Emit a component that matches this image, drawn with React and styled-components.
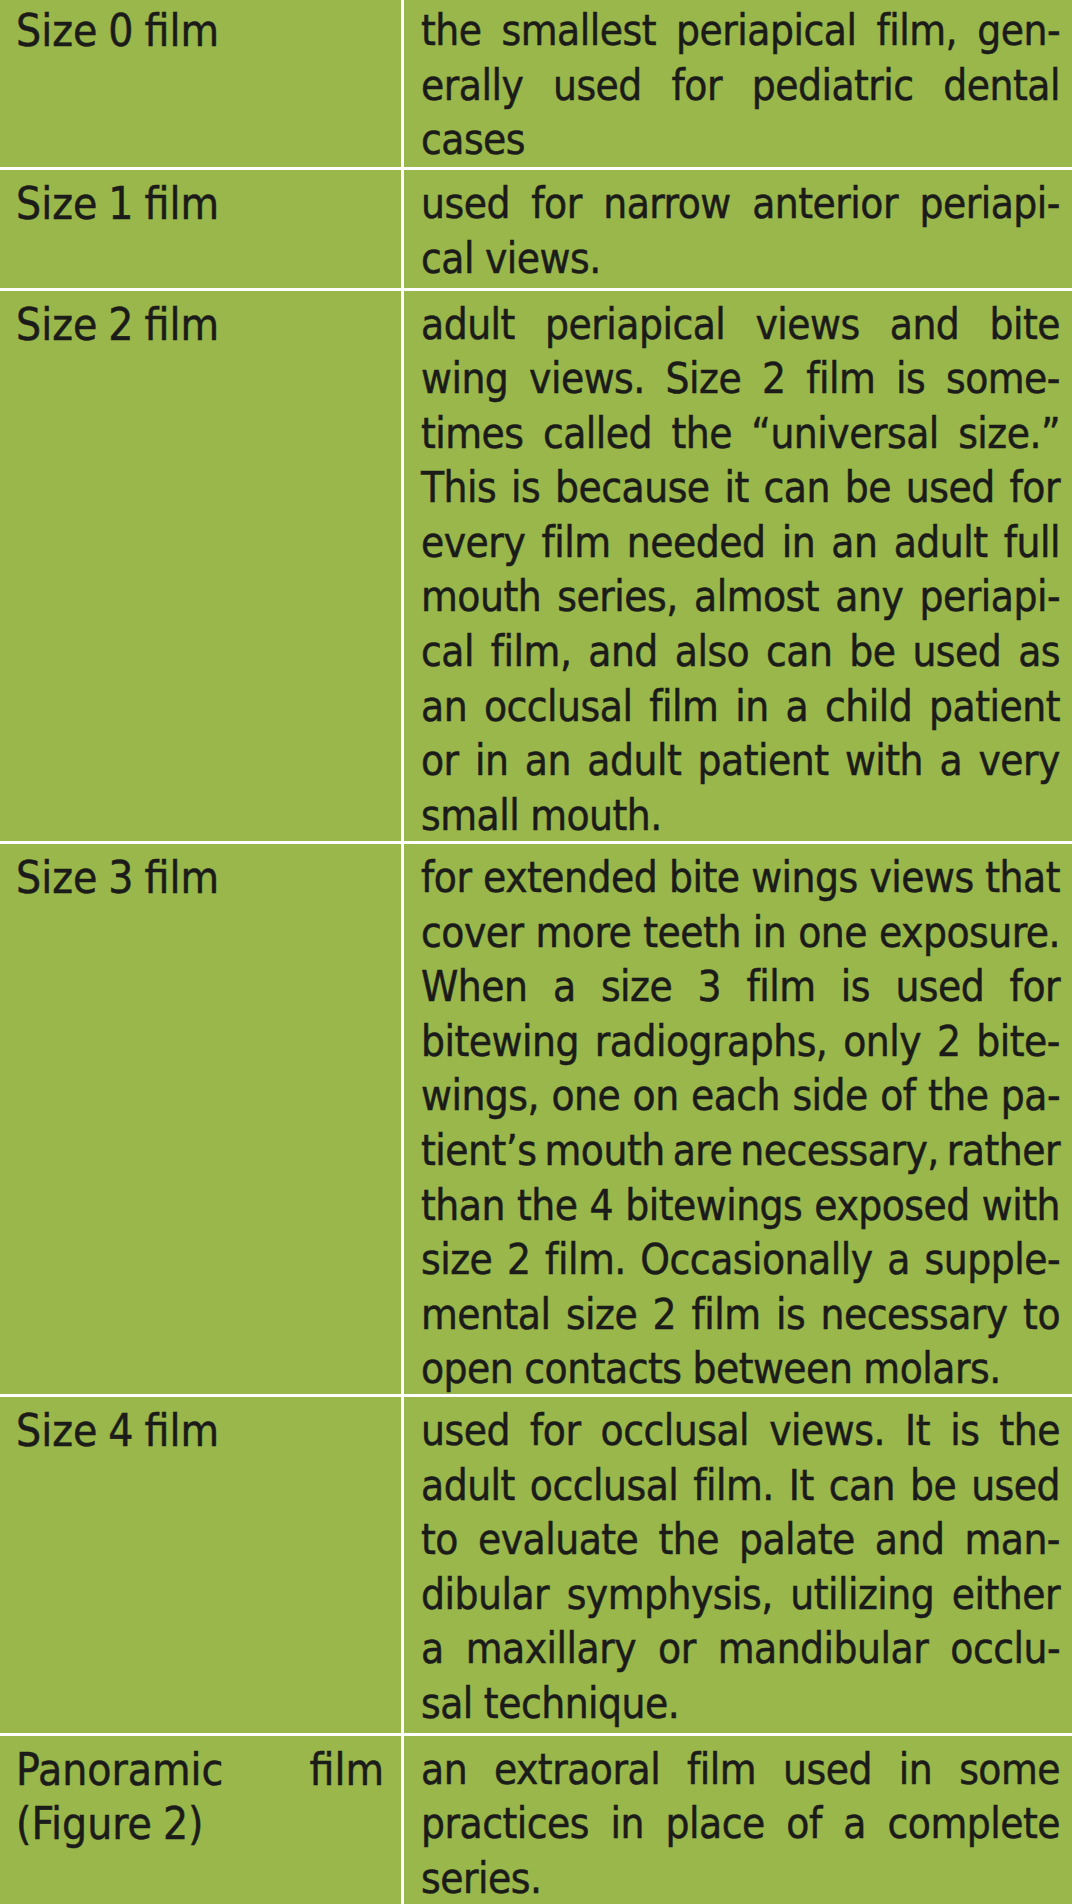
import React from 'react';
import styled, { createGlobalStyle } from "styled-components";

const Global = createGlobalStyle`
    html, body {
        margin: 0;
        padding: 0;
        background: #99b74a;
    }
`;

const Table = styled.div`
    display: grid;
    grid-template-columns: 401px 1fr;
    grid-template-rows: ${props => props.$rows};
    gap: 3px;
    margin-top: -3px;
    background: #ffffff;
    color: #1b1b19;
    font-family: "DejaVu Sans Condensed", "DejaVu Sans", sans-serif;
    line-height: 54.6px;
    -webkit-text-stroke: 0.5px #1b1b19;
`;

const Label = styled.div`
    background: #99b74a;
    padding: 7px 17px 0 16px;
    font-size: 44px;
`;

const Desc = styled.div`
    background: #99b74a;
    padding: 7px 15px 0 17px;
    font-size: 42px;
    letter-spacing: -0.5px;
`;

const Line = styled.div`
    display: flex;
    justify-content: ${props => props.$last ? 'flex-start' : 'space-between'};
    gap: ${props => props.$last ? '11px' : '8px'};
    white-space: nowrap;
`;

const rows = [
    {
        size: ["Size 0 film"],
        text: [
            "the smallest periapical film, gen-",
            "erally used for pediatric dental",
            "cases",
        ],
    },
    {
        size: ["Size 1 film"],
        text: [
            "used for narrow anterior periapi-",
            "cal views.",
        ],
    },
    {
        size: ["Size 2 film"],
        text: [
            "adult periapical views and bite",
            "wing views. Size 2 film is some-",
            "times called the \u201Cuniversal size.\u201D",
            "This is because it can be used for",
            "every film needed in an adult full",
            "mouth series, almost any periapi-",
            "cal film, and also can be used as",
            "an occlusal film in a child patient",
            "or in an adult patient with a very",
            "small mouth.",
        ],
    },
    {
        size: ["Size 3 film"],
        text: [
            "for extended bite wings views that",
            "cover more teeth in one exposure.",
            "When a size 3 film is used for",
            "bitewing radiographs, only 2 bite-",
            "wings, one on each side of the pa-",
            "tient\u2019s mouth are necessary, rather",
            "than the 4 bitewings exposed with",
            "size 2 film. Occasionally a supple-",
            "mental size 2 film is necessary to",
            "open contacts between molars.",
        ],
    },
    {
        size: ["Size 4 film"],
        text: [
            "used for occlusal views. It is the",
            "adult occlusal film. It can be used",
            "to evaluate the palate and man-",
            "dibular symphysis, utilizing either",
            "a maxillary or mandibular occlu-",
            "sal technique.",
        ],
    },
    {
        size: ["Panoramic film", "(Figure 2)"],
        text: [
            "an extraoral film used in some",
            "practices in place of a complete",
            "series.",
        ],
    },
];

const Lines = ({ lines }) => (
    <>
        {lines.map((line, i) => (
            <Line key={i} $last={i === lines.length - 1}>
                {line.split(' ').map((word, j) => <span key={j}>{word}</span>)}
            </Line>
        ))}
    </>
);

const App = () => {
    return (
        <>
            <Global />
            <Table $rows="170px 117.5px 550.5px 550px 335.5px 1fr">
                {rows.map((row, i) => (
                    <React.Fragment key={i}>
                        <Label><Lines lines={row.size} /></Label>
                        <Desc><Lines lines={row.text} /></Desc>
                    </React.Fragment>
                ))}
            </Table>
        </>
    )
}

export default App;
